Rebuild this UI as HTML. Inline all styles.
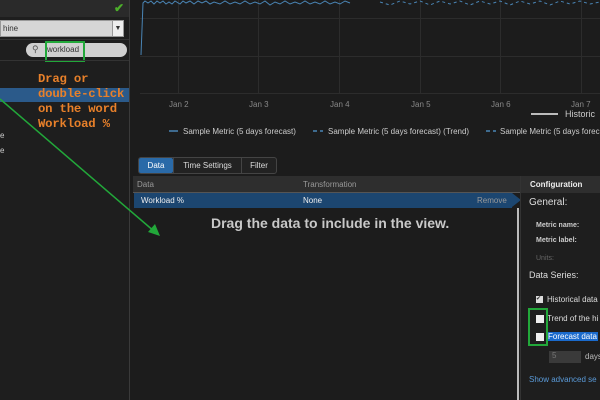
<!DOCTYPE html>
<html><head><style>
*{margin:0;padding:0;box-sizing:border-box}
body{width:600px;height:400px;background:#1c1c1c;position:relative;overflow:hidden;font-family:"Liberation Sans",sans-serif;color:#ddd}
.a{position:absolute}
.t{font-size:8px;color:#999}
.mono{font-family:"Liberation Mono",monospace;font-size:12.3px;color:#e8802a;line-height:15px;font-weight:bold;letter-spacing:-0.2px}
</style></head><body>
<div class="a" style="left:0;top:0;width:129px;height:400px;background:#1e1e1e"></div>
<div class="a" style="left:0;top:0;width:129px;height:17px;background:#2a2a2a"></div>
<div class="a" style="left:114px;top:1px;color:#4caf2a;font-size:12px;font-weight:bold">✔</div>
<div class="a" style="left:0;top:20px;width:124px;height:17px;background:#d6d6d6;border:1px solid #999;font-size:8px;color:#333;padding:3px 0 0 2px">hine</div>
<div class="a" style="left:112px;top:21px;width:11px;height:15px;background:#eee;border-left:1px solid #999;font-size:7px;color:#333;text-align:center;line-height:15px">▼</div>
<div class="a" style="left:0;top:39px;width:129px;height:1px;background:#333"></div>
<div class="a" style="left:26px;top:43px;width:101px;height:14px;background:#d0d0d0;border-radius:7px"></div>
<div class="a" style="left:32px;top:44px;font-size:9px;color:#555">⚲</div>
<div class="a" style="left:47px;top:45px;font-size:8px;color:#333">workload</div>
<div class="a" style="left:45px;top:41px;width:40px;height:21px;border:2px solid #22a83a"></div>
<div class="a" style="left:0;top:60px;width:129px;height:1px;background:#333"></div>
<div class="a" style="left:0;top:88px;width:129px;height:14px;background:#2b5a8a"></div>
<div class="a mono" style="left:38px;top:72px">Drag or<br>double-click<br>on the word<br>Workload %</div>
<div class="a t" style="left:0;top:131px;color:#ccc">e</div>
<div class="a t" style="left:0;top:146px;color:#ccc">e</div>
<div class="a" style="left:129px;top:0;width:1px;height:400px;background:#3a3a3a"></div>
<svg class="a" style="left:130px;top:0" width="470" height="150">
<g stroke="#2c2c2c" stroke-width="1">
<line x1="10" y1="18.5" x2="470" y2="18.5"/><line x1="10" y1="56.5" x2="470" y2="56.5"/><line x1="10" y1="93.5" x2="470" y2="93.5"/>
<line x1="48.5" y1="0" x2="48.5" y2="93"/><line x1="128.5" y1="0" x2="128.5" y2="93"/><line x1="209.5" y1="0" x2="209.5" y2="93"/><line x1="290.5" y1="0" x2="290.5" y2="93"/><line x1="370.5" y1="0" x2="370.5" y2="93"/><line x1="451.5" y1="0" x2="451.5" y2="93"/>
</g>
<polyline fill="none" stroke="#4a85b5" stroke-width="1" points="11,55 13,3 15,1 18,3 21,1 24,4 27,1 30,3 33,1 36,4 39,2 42,4 45,1 50,4 53,1 56,3 60,1 64,4 68,1 72,3 76,1 80,4 84,2 90,4 95,1 100,4 105,2 110,4 115,1 120,4 125,2 130,4 135,1 140,5 145,2 150,4 155,1 160,4 165,2 170,4 175,1 180,4 185,2 190,4 195,1 200,4 205,2 210,4 215,1 220,3"/>
<polyline fill="none" stroke="#4a85b5" stroke-width="1" stroke-dasharray="3,3" points="250,2 260,5 270,1 280,4 290,1 300,5 310,1 320,4 330,1 340,5 350,1 360,4 370,1 380,5 390,1 400,4 410,1 420,5 430,1 440,4 450,1 460,4 470,2"/>
<g font-size="8" fill="#888" font-family="Liberation Sans"><text x="39" y="107">Jan 2</text><text x="119" y="107">Jan 3</text><text x="200" y="107">Jan 4</text><text x="281" y="107">Jan 5</text><text x="361" y="107">Jan 6</text><text x="441" y="107">Jan 7</text></g>
<line x1="401" y1="114" x2="428" y2="114" stroke="#bbb" stroke-width="2"/>
<text x="435" y="117" font-size="9" fill="#ccc" font-family="Liberation Sans">Historic</text>
<g font-size="8" fill="#ccc" font-family="Liberation Sans">
<line x1="39" y1="131" x2="48" y2="131" stroke="#4a85b5" stroke-width="1.5"/><text x="53" y="134">Sample Metric (5 days forecast)</text>
<line x1="183" y1="131" x2="193" y2="131" stroke="#4a85b5" stroke-width="1.5" stroke-dasharray="4,3"/><text x="198" y="134">Sample Metric (5 days forecast) (Trend)</text>
<line x1="356" y1="131" x2="366" y2="131" stroke="#4a85b5" stroke-width="1.5" stroke-dasharray="4,3"/><text x="370" y="134">Sample Metric (5 days forecast)</text>
</g>
</svg>
<div class="a" style="left:138px;top:157px;width:139px;height:17px;border:1px solid #444;border-radius:3px;background:#222"></div>
<div class="a" style="left:139px;top:158px;width:34px;height:15px;background:#2a6aa8;border-radius:2px;font-size:8px;color:#fff;text-align:center;line-height:15px">Data</div>
<div class="a" style="left:173px;top:158px;width:68px;height:15px;border-left:1px solid #444;font-size:8px;color:#ddd;text-align:center;line-height:15px">Time Settings</div>
<div class="a" style="left:241px;top:158px;width:35px;height:15px;border-left:1px solid #444;font-size:8px;color:#ddd;text-align:center;line-height:15px">Filter</div>
<div class="a" style="left:133px;top:176px;width:387px;height:17px;background:#2e2e2e;border-bottom:1px solid #555"></div>
<div class="a t" style="left:137px;top:180px">Data</div>
<div class="a t" style="left:303px;top:180px">Transformation</div>
<div class="a" style="left:134px;top:193px;width:378px;height:15px;background:#1c4670"></div>
<div class="a" style="left:512px;top:193px;width:0;height:0;border-top:7.5px solid transparent;border-bottom:7.5px solid transparent;border-left:9px solid #1c4670"></div>
<div class="a" style="left:141px;top:196px;font-size:8px;color:#eee">Workload %</div>
<div class="a" style="left:303px;top:196px;font-size:8px;color:#eee">None</div>
<div class="a" style="left:477px;top:196px;font-size:8px;color:#999">Remove</div>
<div class="a" style="left:517px;top:208px;width:2px;height:192px;background:#bbb"></div>
<div class="a" style="left:211px;top:215px;font-size:14px;font-weight:bold;color:#c8c8c8">Drag the data to include in the view.</div>
<svg class="a" style="left:0;top:0" width="200" height="260"><line x1="0" y1="99" x2="155" y2="232" stroke="#22a83a" stroke-width="1.5"/><polygon points="160,236 148,232 155,224" fill="#22a83a"/></svg>
<div class="a" style="left:520px;top:176px;width:80px;height:224px;background:#1e1e1e;border-left:1px solid #333"></div>
<div class="a" style="left:521px;top:176px;width:79px;height:17px;background:#2e2e2e"></div>
<div class="a" style="left:530px;top:180px;font-size:8px;font-weight:bold;color:#eee">Configuration</div>
<div class="a" style="left:529px;top:197px;font-size:10px;color:#ddd">General:</div>
<div class="a" style="left:536px;top:222px;font-size:7px;font-weight:bold;color:#ccc">Metric name:</div>
<div class="a" style="left:536px;top:237px;font-size:7px;font-weight:bold;color:#ccc">Metric label:</div>
<div class="a" style="left:536px;top:255px;font-size:7px;color:#666">Units:</div>
<div class="a" style="left:529px;top:270px;font-size:9px;color:#ddd">Data Series:</div>
<div class="a" style="left:536px;top:296px;width:7px;height:7px;background:#ddd;font-size:6px;color:#333;line-height:7px">✔</div>
<div class="a" style="left:547px;top:295px;font-size:8px;color:#ddd">Historical data</div>
<div class="a" style="left:536px;top:315px;width:8px;height:8px;background:#eee"></div>
<div class="a" style="left:547px;top:314px;font-size:8px;color:#ddd">Trend of the hi</div>
<div class="a" style="left:536px;top:333px;width:8px;height:8px;background:#eee"></div>
<div class="a" style="left:547px;top:332px;font-size:8px;color:#fff;background:#1a6acc;padding:0 1px">Forecast data</div>
<div class="a" style="left:528px;top:308px;width:20px;height:38px;border:2px solid #22a83a"></div>
<div class="a" style="left:549px;top:351px;width:32px;height:12px;background:#3a3a3a;font-size:8px;color:#777;padding-left:3px">5</div>
<div class="a" style="left:585px;top:352px;font-size:8px;color:#bbb">days</div>
<div class="a" style="left:529px;top:375px;font-size:8px;color:#5a9ad8">Show advanced se</div>
</body></html>
